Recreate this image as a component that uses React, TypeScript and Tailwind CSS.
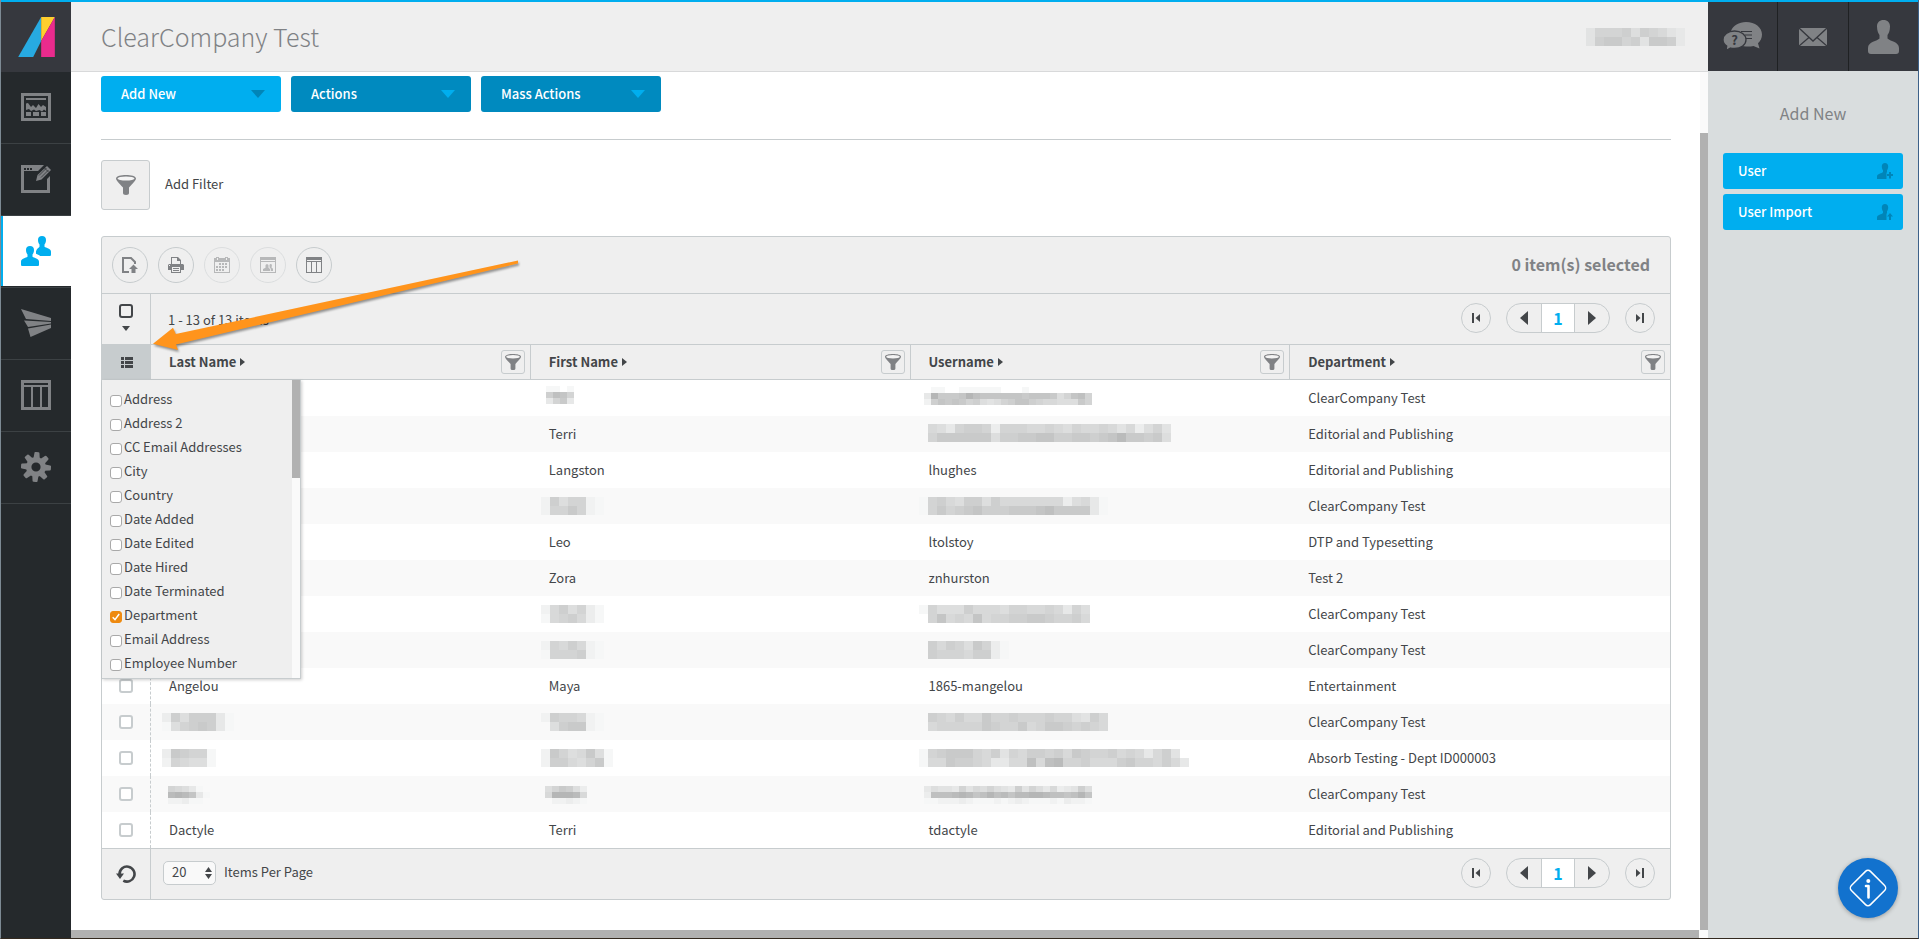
import type { ReactNode } from 'react';

type MosaicData = { x: number; y?: number; size?: number; lines: string[] };
type Cell = string | MosaicData;

// Each hex digit is a grey level, a dot is an empty cell
function Mosaic({ x, y = 9, size = 9, lines, width = 290 }: MosaicData & { width?: number }) {
  const h = size === 7 ? 6 : size;
  return (
    <svg width={width} height="36" className="block" aria-hidden="true" shapeRendering="crispEdges">
      {lines.map((line, row) =>
        line.split('').map((char, col) => {
          if (char === '.') return null;
          const v = 176 + 5 * parseInt(char, 16);
          return (
            <rect
              key={`${row}-${col}`}
              x={x + col * size}
              y={y + row * h}
              width={size}
              height={h}
              fill={`rgb(${v},${v + 1},${v + 1})`}
            />
          );
        }),
      )}
    </svg>
  );
}

const rows: Cell[][] = [
  ['', { x: 15, y: 6, size: 7, lines: ['ee.e', '6347', 'b75b'] }, { x: 13, y: 7, size: 7, lines: ['.ee..eeeeee...e', 'b15554134444445444597437', 'd64545769a97644678899957'] }, 'ClearCompany Test'],
  ['', 'Terri', { x: 17, y: 8, lines: ['89b7667c7778878978878a8c97a', '755555596655446655654255659'] }, 'Editorial and Publishing'],
  ['', 'Langston', 'lhughes', 'Editorial and Publishing'],
  ['', { x: 10, lines: ['d6977de', 'd7757de'] }, { x: 8, lines: ['e768966968888888c98be', 'e75765466655543555 5be'.replace(' ', '')] }, 'ClearCompany Test'],
  ['', 'Leo', 'ltolstoy', 'DTP and Typesetting'],
  ['', 'Zora', 'znhurston', 'Test 2'],
  ['', { x: 10, lines: ['d8697ce', 'e8768ce'] }, { x: 8, lines: ['e799968889778878b79', '.748784877665567768'] }, 'ClearCompany Test'],
  ['', { x: 10, lines: ['d7868de', 'e7776de'] }, { x: 17, lines: ['6867957ce', '6777866ce'] }, 'ClearCompany Test'],
  ['Angelou', 'Maya', '1865-mangelou', 'Entertainment'],
  [{ x: 11, lines: ['c69666be', 'e97656be'] }, { x: 10, lines: ['d6778de', '.9655de'] }, { x: 17, lines: ['67868857767776779a68', '87777756775875567678'] }, 'ClearCompany Test'],
  [{ x: 11, lines: ['c5677e', 'd7899e'] }, { x: 10, lines: ['d579859e', 'd668975e'] }, { x: 8, lines: ['e76555786a786676856776878b86a', 'e8856678bb8838327768886577868b'] }, 'Absorb Testing - Dept ID000003'],
  [{ x: 17, y: 10, size: 7, lines: ['789be', '2124be', 'ddcee'] }, { x: 14, y: 10, size: 7, lines: ['97569c', '811128', '.ddcde'] }, { x: 13, y: 10, size: 7, lines: ['b9aab7a8979ab6a79b8cba69', 'c33321243132422112334314', 'eedddcdeeededcdeeedecdde'] }, 'ClearCompany Test'],
  ['Dactyle', 'Terri', 'tdactyle', 'Editorial and Publishing'],
];

const columns = ['Last Name', 'First Name', 'Username', 'Department'];

const fields = [
  'Address',
  'Address 2',
  'CC Email Addresses',
  'City',
  'Country',
  'Date Added',
  'Date Edited',
  'Date Hired',
  'Date Terminated',
  'Department',
  'Email Address',
  'Employee Number',
];

function Logo() {
  return (
    <svg width="37" height="40" viewBox="54 51 110 120" aria-hidden="true">
      <path d="M123 51 54 171h45l24-48z" fill="#27aae1" />
      <path d="M123 51h41l-41 72z" fill="#ffcf2e" />
      <path d="M164 51v120h-41v-48z" fill="#ea2b8d" />
    </svg>
  );
}

function DashboardIcon() {
  return (
    <svg width="30" height="28" viewBox="0 0 30 28" fill="currentColor" aria-hidden="true">
      <path fillRule="evenodd" d="M0 0h30v28H0zM3 3v22h24V3z" />
      <path d="M5 5h20v2H5z" />
      <path d="M5 10.500l2-.5 3 4 2-2 3 3 2.500-4 2.500 3 2-2 3 2v4l-2-1.500-2 2-2.500-1.500L15 18l-2-1.500-3 1.500-2-2-3 1z" />
      <path d="M5 19h5v4H5zM12 19h6v4h-6zM20 19h5v4h-5z" />
    </svg>
  );
}

function EditIcon() {
  return (
    <svg width="30" height="28" viewBox="0 0 30 28" fill="currentColor" aria-hidden="true">
      <path d="M0 0h23l-6 6H3v19h23V14l3-3v17H0z" />
      <path d="M3 3h2v2H3zM6 3h2v2H6zM9 3h2v2H9z" fill="#25292c" />
      <path d="M15 16l1.500-6L26 1l4 4-9.500 9.500z" />
      <path d="M18 10.500l7.500-7.500M20 12.500l7.500-7.500M23.500 3l4 4" stroke="#25292c" strokeWidth=".7" fill="none" />
    </svg>
  );
}

function UsersIcon() {
  return (
    <svg width="30" height="30" viewBox="0 0 30 30" fill="currentColor" aria-hidden="true">
      <path d="M9 10c2.600 0 4 1.600 4 4 0 2.400-.8 3.600-1.500 4.600v2.200c1.500 1.200 6.500 1.600 6.500 5V28.500c0 1-.5 1.500-1.500 1.500h-15C.5 30 0 29.500 0 28.500v-2.700c0-3.400 5-3.800 6.500-5v-2.200C5.800 17.600 5 16.400 5 14c0-2.400 1.400-4 4-4z" />
      <path d="M21 0c2.600 0 4 1.600 4 4 0 2.400-.8 3.600-1.500 4.600v2.200c1.500 1.200 6.500 1.600 6.500 5v2.700c0 1-.5 1.500-1.500 1.500H19c-1-1.300-2.500-1.700-4-2.300v-2.500c.8-2.700 3-3.400 3.500-4.400V8.600C17.800 7.600 17 6.400 17 4c0-2.400 1.400-4 4-4z" />
    </svg>
  );
}

function SendIcon() {
  return (
    <svg width="30" height="28" viewBox="0 0 30 28" fill="currentColor" aria-hidden="true">
      <path d="M0 0l30 9v3L5 10zM3 11.500l27 1.500v1.500L7 18zM7 19.500L30 15.500V19L9.500 28z" />
    </svg>
  );
}

function TableIcon() {
  return (
    <svg width="30" height="30" viewBox="0 0 30 30" fill="currentColor" aria-hidden="true">
      <path fillRule="evenodd" d="M0 0h30v30H0zM3 3v2h24V3zM3 7v20h7V7zM12 7v20h7V7zM21 7v20h6V7z" />
    </svg>
  );
}

function GearIcon() {
  return (
    <svg width="30" height="30" viewBox="-15 -15 30 30" fill="currentColor" aria-hidden="true">
      <g transform="rotate(4)">
        {[0, 45, 90, 135, 180, 225, 270, 315].map((a) => (
          <path key={a} transform={`rotate(${a})`} d="M-3.200-8 -2.500-14q.1-1 1-1h3q.9 0 1 1L3.200-8z" />
        ))}
      </g>
      <circle r="7.300" fill="none" stroke="currentColor" strokeWidth="5.400" />
    </svg>
  );
}

function FunnelIcon({ size = 20 }: { size?: number }) {
  return (
    <svg width={size} height={size} viewBox="0 0 20 20" aria-hidden="true">
      <path d="M0 3.500C0 1 5 0 10 0s10 1 10 3.500c0 2-3 4.500-7 9V18c0 1.300-1 2-3 2s-3-.7-3-2v-5.500C3 8 0 5.500 0 3.500z" fill="#808285" />
      <ellipse cx="10" cy="3.500" rx="8.500" ry="2.100" fill="#f4f4f4" />
    </svg>
  );
}

function ExportIcon() {
  return (
    <svg width="16" height="16" viewBox="0 0 16 16" fill="none" aria-hidden="true">
      <path d="M7 15H1V1h8l4 4v2" stroke="#808285" strokeWidth="2" />
      <path d="M11.500 7.500L16 12h-2.500v4h-4v-4H7z" fill="#808285" />
    </svg>
  );
}

function PrintIcon() {
  return (
    <svg width="16" height="16" viewBox="0 0 16 16" fill="#808285" aria-hidden="true">
      <path d="M3 0h7l3 3v4h-1V4H9V1H4v6H3z" />
      <path d="M1 7h14l1 1v5h-3v-3H3v3H0V8z" />
      <path fillRule="evenodd" d="M3 9h10v7H3zM4 10v5h8v-5z" />
      <path d="M4 10h8v5H4z" fill="#efefef" />
      <path d="M5 11h6v1H5zM5 13h6v1H5z" />
      <path d="M1 8h1v1H1z" fill="#efefef" />
    </svg>
  );
}

function CalendarIcon() {
  return (
    <svg width="16" height="16" viewBox="0 0 16 16" fill="#808285" aria-hidden="true">
      <path fillRule="evenodd" d="M0 1h2V0h3v1h6V0h3v1h2v15H0zM1 5v10h14V5z" />
      <path d="M3 1h1v2H3zM12 1h1v2h-1z" fill="#efefef" />
      <path d="M5 6h2v2H5zM8 6h2v2H8zM11 6h2v2h-2zM2 9h2v2H2zM5 9h2v2H5zM8 9h2v2H8zM11 9h2v2h-2zM2 12h2v2H2zM5 12h2v2H5zM8 12h2v2H8z" />
    </svg>
  );
}

function PeopleWindowIcon() {
  return (
    <svg width="16" height="16" viewBox="0 0 16 16" fill="#808285" aria-hidden="true">
      <path fillRule="evenodd" d="M0 0h16v16H0zM1 3v1h14V3zM1 5v10h14V5z" />
      <path d="M3 14v-2l2.500-1.200V8.500c0-1.700 3-1.700 3 0v2.300L10 12v2zM9.500 8c.2-1.300 2.400-1.200 2.400.5 0 1-.4 1.300-.4 2l1.500 1.200V14h-2.200v-2.300L9.600 10.500z" />
    </svg>
  );
}

function GridIcon() {
  return (
    <svg width="16" height="16" viewBox="0 0 16 16" fill="#808285" aria-hidden="true">
      <path fillRule="evenodd" d="M0 0h16v16H0zM1 5v10h4V5zM6 5v10h4V5zM11 5v10h4V5z" />
      <path d="M1 3h14v1H1z" fill="#efefef" />
    </svg>
  );
}

function MessagesIcon() {
  return (
    <svg width="39" height="29" viewBox="0 0 39 29" aria-hidden="true">
      <path d="M23 0c9 0 16 5.300 16 12.500 0 3.700-1.600 6.500-4 8.700l1.500 5.300-6-2.500c-4.500 1-10 .8-13-1L8 9C10 3.500 16 0 23 0z" fill="#808285" />
      <path d="M18 9.500h11M22 13h7M23 16.500h6" stroke="#36383e" />
      <path d="M11.500 9C18 9 23 12.800 23 17.800s-5 8.700-11.500 8.700c-1.500 0-2.800-.1-4-.5L3 28.500l.7-4.400C1.300 22.500 0 20.300 0 17.800 0 12.800 5 9 11.500 9z" fill="#808285" stroke="#36383e" strokeWidth="1.300" />
      <text x="11.500" y="23" textAnchor="middle" fontSize="13" fontWeight="700" fill="#36383e">?</text>
    </svg>
  );
}

function MailIcon() {
  return (
    <svg width="28" height="18" viewBox="0 0 28 18" aria-hidden="true">
      <path d="M0 0h28v18H0z" fill="#808285" />
      <path d="M0 0l14 13L28 0M0 18l10.500-9M28 18l-10.500-9" stroke="#36383e" strokeWidth="1.300" fill="none" />
    </svg>
  );
}

function PersonIcon() {
  return (
    <svg width="31" height="34" viewBox="0 0 31 34" fill="#808285" aria-hidden="true">
      <path d="M15.500 0C19.500 0 22 2.500 22 6.500c0 4.500-1.500 7-2.500 8.500v3.500c2 2.500 11.500 3 11.500 9.500v3c0 2-1 3-3 3H3c-2 0-3-1-3-3v-3c0-6.500 9.500-7 11.500-9.500V15C10.500 13.500 9 11 9 6.500 9 2.500 11.500 0 15.500 0z" />
    </svg>
  );
}

function UserActionIcon({ kind }: { kind: 'plus' | 'up' }) {
  return (
    <svg width="16" height="16" viewBox="0 0 16 16" fill="#0085b8" aria-hidden="true">
      <path d="M8 0c2 0 3.200 1.300 3.200 3.400 0 2-.7 3-1.200 3.800v1.900l-.5 1V16H0v-2.300c0-3 4.800-3 6-4.600V7.200C5.500 6.400 4.800 5.400 4.800 3.400 4.800 1.300 6 0 8 0z" />
      <path d="M10 8.500h6V16h-6z" fill="#00aeef" />
      {kind === 'plus' ? (
        <path d="M12 9h2v2h2v2h-2v2.500h-2V13h-2v-2h2z" />
      ) : (
        <path d="M13 9l3 3.500h-2V16h-2v-3.500h-2z" />
      )}
    </svg>
  );
}

const navItems: { label: string; icon: ReactNode; active?: boolean }[] = [
  { label: 'Dashboard', icon: <DashboardIcon /> },
  { label: 'Courses', icon: <EditIcon /> },
  { label: 'Users', icon: <UsersIcon />, active: true },
  { label: 'Messages', icon: <SendIcon /> },
  { label: 'Reports', icon: <TableIcon /> },
  { label: 'Settings', icon: <GearIcon /> },
];

const tools = [
  { label: 'Export', icon: <ExportIcon /> },
  { label: 'Print', icon: <PrintIcon /> },
  { label: 'Schedule', icon: <CalendarIcon />, disabled: true },
  { label: 'Users view', icon: <PeopleWindowIcon />, disabled: true },
  { label: 'Layouts', icon: <GridIcon /> },
];

function Pager() {
  return (
    <nav aria-label="Pages" className="flex items-center gap-[15px] pr-[15px] pb-[2px] text-[#434649]">
      <button type="button" aria-label="First page" className="flex size-[30px] items-center justify-center rounded-full border border-[#c7ccce]">
        <svg width="8" height="10" viewBox="0 0 8 10" fill="currentColor"><path d="M0 0h2v10H0zM8 1v8L3.500 5z" /></svg>
      </button>
      <div className="flex h-[30px] overflow-hidden rounded-full border border-[#c7ccce]">
        <button type="button" aria-label="Previous page" className="flex w-[34px] items-center justify-center">
          <svg width="8" height="14" viewBox="0 0 8 14" fill="currentColor"><path d="M8 0v14L0 7z" /></svg>
        </button>
        <button type="button" className="w-[34px] border-x border-[#c7ccce] bg-white text-base leading-7 font-bold text-[#00aeef]">
          1
        </button>
        <button type="button" aria-label="Next page" className="flex w-[34px] items-center justify-center">
          <svg width="8" height="14" viewBox="0 0 8 14" fill="currentColor"><path d="M0 0v14l8-7z" /></svg>
        </button>
      </div>
      <button type="button" aria-label="Last page" className="flex size-[30px] items-center justify-center rounded-full border border-[#c7ccce]">
        <svg width="8" height="10" viewBox="0 0 8 10" fill="currentColor"><path d="M6 0h2v10H6zM0 1v8l4.500-4z" /></svg>
      </button>
    </nav>
  );
}

function MenuButton({ label, primary }: { label: string; primary?: boolean }) {
  return (
    <button
      type="button"
      className={`flex h-9 w-[180px] items-center justify-between rounded-[3px] pr-4 pl-5 font-medium text-white ${primary ? 'bg-[#00aeef]' : 'bg-[#008abf]'}`}
    >
      <span className="pb-px">{label}</span>
      <svg width="14" height="8" viewBox="0 0 14 8" aria-hidden="true">
        <path d="M0 0h14L7 8z" fill={primary ? '#0085b8' : '#00aeef'} />
      </svg>
    </button>
  );
}

function SideButton({ label, kind }: { label: string; kind: 'plus' | 'up' }) {
  return (
    <button type="button" className="flex h-9 items-center justify-between rounded-[3px] bg-[#00aeef] pr-[10px] pl-[15px] font-medium text-white">
      <span className="pb-px">{label}</span>
      <UserActionIcon kind={kind} />
    </button>
  );
}

function ColumnPicker() {
  return (
    <div className="absolute top-full left-0 z-10 mt-px flex w-[199px] border-r border-b border-[#c7ccce] bg-[#efefef] text-left font-normal shadow-[1px_1px_3px_rgba(0,0,0,0.2)]">
      <ul className="flex-1 pt-[7px] pb-[3px] pl-2">
        {fields.map((field) => (
          <li key={field} className="flex h-6 items-center">
            <label className="flex items-center gap-[2px]">
              <input type="checkbox" defaultChecked={field === 'Department'} className="peer sr-only" />
              <span className="mt-1 flex size-3 items-center justify-center rounded-[3px] border border-[#a9a9a9] bg-white peer-checked:border-[#ee8a10] peer-checked:bg-[#ee8a10]">
                {field === 'Department' && (
                  <svg width="8" height="8" viewBox="0 0 8 8" fill="none" aria-hidden="true">
                    <path d="M.7 4.300L3 6.700 7.200 1" stroke="#fff" strokeWidth="1.500" />
                  </svg>
                )}
              </span>
              {field}
            </label>
          </li>
        ))}
      </ul>
      <div className="w-2 bg-[#fafafa]">
        <div className="h-[98px] bg-[#b1b1b1]" />
      </div>
    </div>
  );
}

function UserTable() {
  return (
    <table className="w-full table-fixed border-separate border-spacing-0">
      <thead>
        <tr className="bg-[#efefef]">
          <th className="w-[49px] border-y border-[#c7ccce] bg-[#c7ccce] p-0">
            <div className="relative flex h-[34px] items-center justify-center">
              <button type="button" aria-label="Choose columns">
                <svg width="12" height="11" viewBox="0 0 12 11" fill="#434649"><path d="M0 0h3v3H0zM4 0h8v3H4zM0 4h3v3H0zM4 4h8v3H4zM0 8h3v3H0zM4 8h8v3H4z" /></svg>
              </button>
              <ColumnPicker />
            </div>
          </th>
          {columns.map((column) => (
            <th key={column} className="border-y border-r border-[#c7ccce] py-0 pr-[5px] pl-[18px] last:border-r-0">
              <div className="flex items-center justify-between">
                <button type="button" className="flex items-center gap-1 font-bold">
                  {column}
                  <svg width="5" height="8" viewBox="0 0 5 8" fill="currentColor" aria-hidden="true"><path d="M0 0v8l5-4z" /></svg>
                </button>
                <button type="button" aria-label={`Filter ${column}`} className="flex size-6 items-center justify-center rounded-[3px] border border-[#c7ccce]">
                  <FunnelIcon size={16} />
                </button>
              </div>
            </th>
          ))}
        </tr>
      </thead>
      <tbody>
        {rows.map((row, i) => (
          <tr key={i} className="h-9 bg-white even:bg-[#f9f9f9]">
            <td className="border-r border-dashed border-[#c7ccce] p-0">
              <input
                type="checkbox"
                aria-label={`Select row ${i + 1}`}
                className="mx-auto block size-[14px] appearance-none rounded-[3px] border-2 border-[#c7ccce] bg-white"
              />
            </td>
            {row.map((cell, j) =>
              typeof cell === 'string' ? (
                <td key={j} className="pt-0 pr-2 pb-px pl-[18px]">{cell}</td>
              ) : (
                <td key={j} className="p-0"><Mosaic {...cell} /></td>
              ),
            )}
          </tr>
        ))}
      </tbody>
    </table>
  );
}

export default function App() {
  return (
    <div className="flex min-h-screen flex-col border-x border-b border-r-[#3d6189] border-b-[#33291f] border-l-[#7d8a94] bg-white font-['Noto_Sans_CJK_SC',sans-serif] text-[13px] leading-5 text-[#434649]">
      <div className="h-[2px] bg-[#00aeef]" />
      <div className="flex flex-1">
        <aside className="w-[70px] shrink-0 bg-[#25292c] text-[#808285]">
          <a href="#home" aria-label="Home" className="flex h-[70px] items-center justify-center bg-[#36383e]">
            <Logo />
          </a>
          <ul>
            {navItems.map((item) => (
              <li key={item.label} className="h-[72px] border-b border-[#3c4144]">
                <a
                  href={`#${item.label.toLowerCase()}`}
                  aria-label={item.label}
                  className={`flex h-[70px] items-center justify-center ${item.active ? 'bg-white text-[#00aeef] shadow-[inset_2px_0_0_#00aeef]' : ''}`}
                >
                  {item.icon}
                </a>
              </li>
            ))}
          </ul>
        </aside>

        <div className="flex min-w-0 flex-1 flex-col">
          <header className="flex h-[70px] items-center justify-between border-b border-[#d8d9da] bg-[#efefef] pl-[30px]">
            <h1 className="pb-[2px] text-[25px] leading-8 font-light text-[#808285]">ClearCompany Test</h1>
            <Mosaic x={0} width={122} lines={['a77769678ab', 'a65576a556b']} />
          </header>

          <div className="flex flex-1">
            <main className="min-w-0 flex-1 pt-1 pr-[29px] pb-[30px] pl-[30px]">
              <div className="flex gap-[10px]">
                <MenuButton label="Add New" primary />
                <MenuButton label="Actions" />
                <MenuButton label="Mass Actions" />
              </div>
              <hr className="mt-[27px] border-[#c7ccce]" />

              <div className="mt-5 flex items-center gap-[15px]">
                <button type="button" id="add-filter" aria-label="Add Filter" className="flex h-[50px] w-[49px] items-center justify-center rounded-[3px] border border-[#c7ccce] bg-[#efefef]">
                  <FunnelIcon />
                </button>
                <label htmlFor="add-filter" className="pb-[2px]">Add Filter</label>
              </div>

              <section className="mt-[26px] rounded-[3px] border border-[#c7ccce] bg-[#efefef]">
                <div className="flex h-[57px] items-center justify-between border-b border-[#c7ccce] pr-5 pl-[10px]">
                  <div className="flex gap-[10px]">
                    {tools.map((tool) => (
                      <button
                        key={tool.label}
                        type="button"
                        aria-label={tool.label}
                        disabled={tool.disabled}
                        className="flex size-9 items-center justify-center rounded-full border border-[#c7ccce] disabled:opacity-50"
                      >
                        {tool.icon}
                      </button>
                    ))}
                  </div>
                  <p className="pb-[2px] text-base font-bold text-[#808285]">0 item(s) selected</p>
                </div>

                <div className="flex h-[50px] items-center">
                  <div className="flex h-full w-[49px] flex-col items-center justify-center gap-2 border-r border-[#c7ccce] pb-[3px]">
                    <input type="checkbox" aria-label="Select all" className="size-[14px] appearance-none rounded-[3px] border-2 border-[#434649]" />
                    <svg width="8" height="5" viewBox="0 0 8 5" fill="#434649" aria-hidden="true"><path d="M0 0h8L4 5z" /></svg>
                  </div>
                  <p className="flex-1 pt-[2px] pl-[17px]">1 - 13 of 13 items</p>
                  <Pager />
                </div>

                <UserTable />

                <div className="flex h-[51px] items-center border-t border-[#c7ccce]">
                  <button type="button" aria-label="Refresh" className="flex h-full w-[49px] items-center justify-center border-r border-[#c7ccce]">
                    <svg width="20" height="18" viewBox="0 0 20 18" fill="none" aria-hidden="true">
                      <path d="M3.500 9a7.500 7.500 0 1 1 3.800 6.600" stroke="#434649" strokeWidth="2.600" />
                      <path d="M0 8.500h8L4 14z" fill="#434649" />
                    </svg>
                  </button>
                  <div className="flex flex-1 items-center gap-2 pb-[3px] pl-3">
                    <div className="relative">
                      <select id="per-page" className="block h-6 w-[53px] appearance-none rounded-[5px] border border-[#c7ccce] bg-[#f9f9f9] pb-[2px] pl-2">
                        <option>20</option>
                      </select>
                      <svg width="7" height="12" viewBox="0 0 7 12" fill="#434649" className="pointer-events-none absolute top-[6px] right-1" aria-hidden="true">
                        <path d="M0 5l3.500-5L7 5zM0 7l3.500 5L7 7z" />
                      </svg>
                    </div>
                    <label htmlFor="per-page" className="pb-[2px]">Items Per Page</label>
                  </div>
                  <Pager />
                </div>
              </section>
            </main>
            <div className="w-2 shrink-0 bg-[#fafafa] pt-[61px]">
              <div className="h-full bg-[#b1b1b1]" />
            </div>
          </div>
          <div className="h-2 bg-[#fafafa] pr-[9px]">
            <div className="h-full bg-[#b1b1b1]" />
          </div>
        </div>

        <aside className="w-[210px] shrink-0 bg-[#d9ddde]">
          <div className="flex h-[69px] divide-x divide-[#1f2123] bg-[#36383e]">
            <a href="#messages" aria-label="Help" className="flex flex-1 items-center justify-center"><MessagesIcon /></a>
            <a href="#mail" aria-label="Mail" className="flex flex-1 items-center justify-center"><MailIcon /></a>
            <a href="#profile" aria-label="Profile" className="flex flex-1 items-center justify-center"><PersonIcon /></a>
          </div>
          <h2 className="pt-[31px] pb-[29px] text-center text-base leading-[22px] text-[#808285]">Add New</h2>
          <div className="flex flex-col gap-[5px] px-[15px]">
            <SideButton label="User" kind="plus" />
            <SideButton label="User Import" kind="up" />
          </div>
        </aside>
      </div>

      <button type="button" aria-label="Information" className="absolute right-[21px] bottom-[21px] flex size-[60px] items-center justify-center rounded-full bg-[#1272ce] shadow-[0_1px_4px_rgba(0,0,0,0.3)]">
        <svg width="40" height="40" viewBox="0 0 40 40" fill="none" stroke="#fff" aria-hidden="true">
          <rect x="6.500" y="6.500" width="27" height="27" rx="3.500" transform="rotate(45 20 20)" strokeWidth="1.500" />
          <circle cx="20.300" cy="13" r="2" fill="#fff" stroke="none" />
          <path d="M18 18h2.500v11.500" strokeWidth="2.600" strokeLinecap="round" strokeLinejoin="round" />
        </svg>
      </button>

      {/* Pointer to the column picker */}
      <svg width="372" height="96" viewBox="150 258 372 96" className="pointer-events-none absolute top-[258px] left-[150px] z-20 drop-shadow-[1px_2px_1px_rgba(0,0,0,0.4)]" aria-hidden="true">
        <path d="M518 260.500v3L176 344.500l2 5.500-25-6.300 20-15.900 2.800 6.200z" fill="#ff941c" />
      </svg>
    </div>
  );
}
